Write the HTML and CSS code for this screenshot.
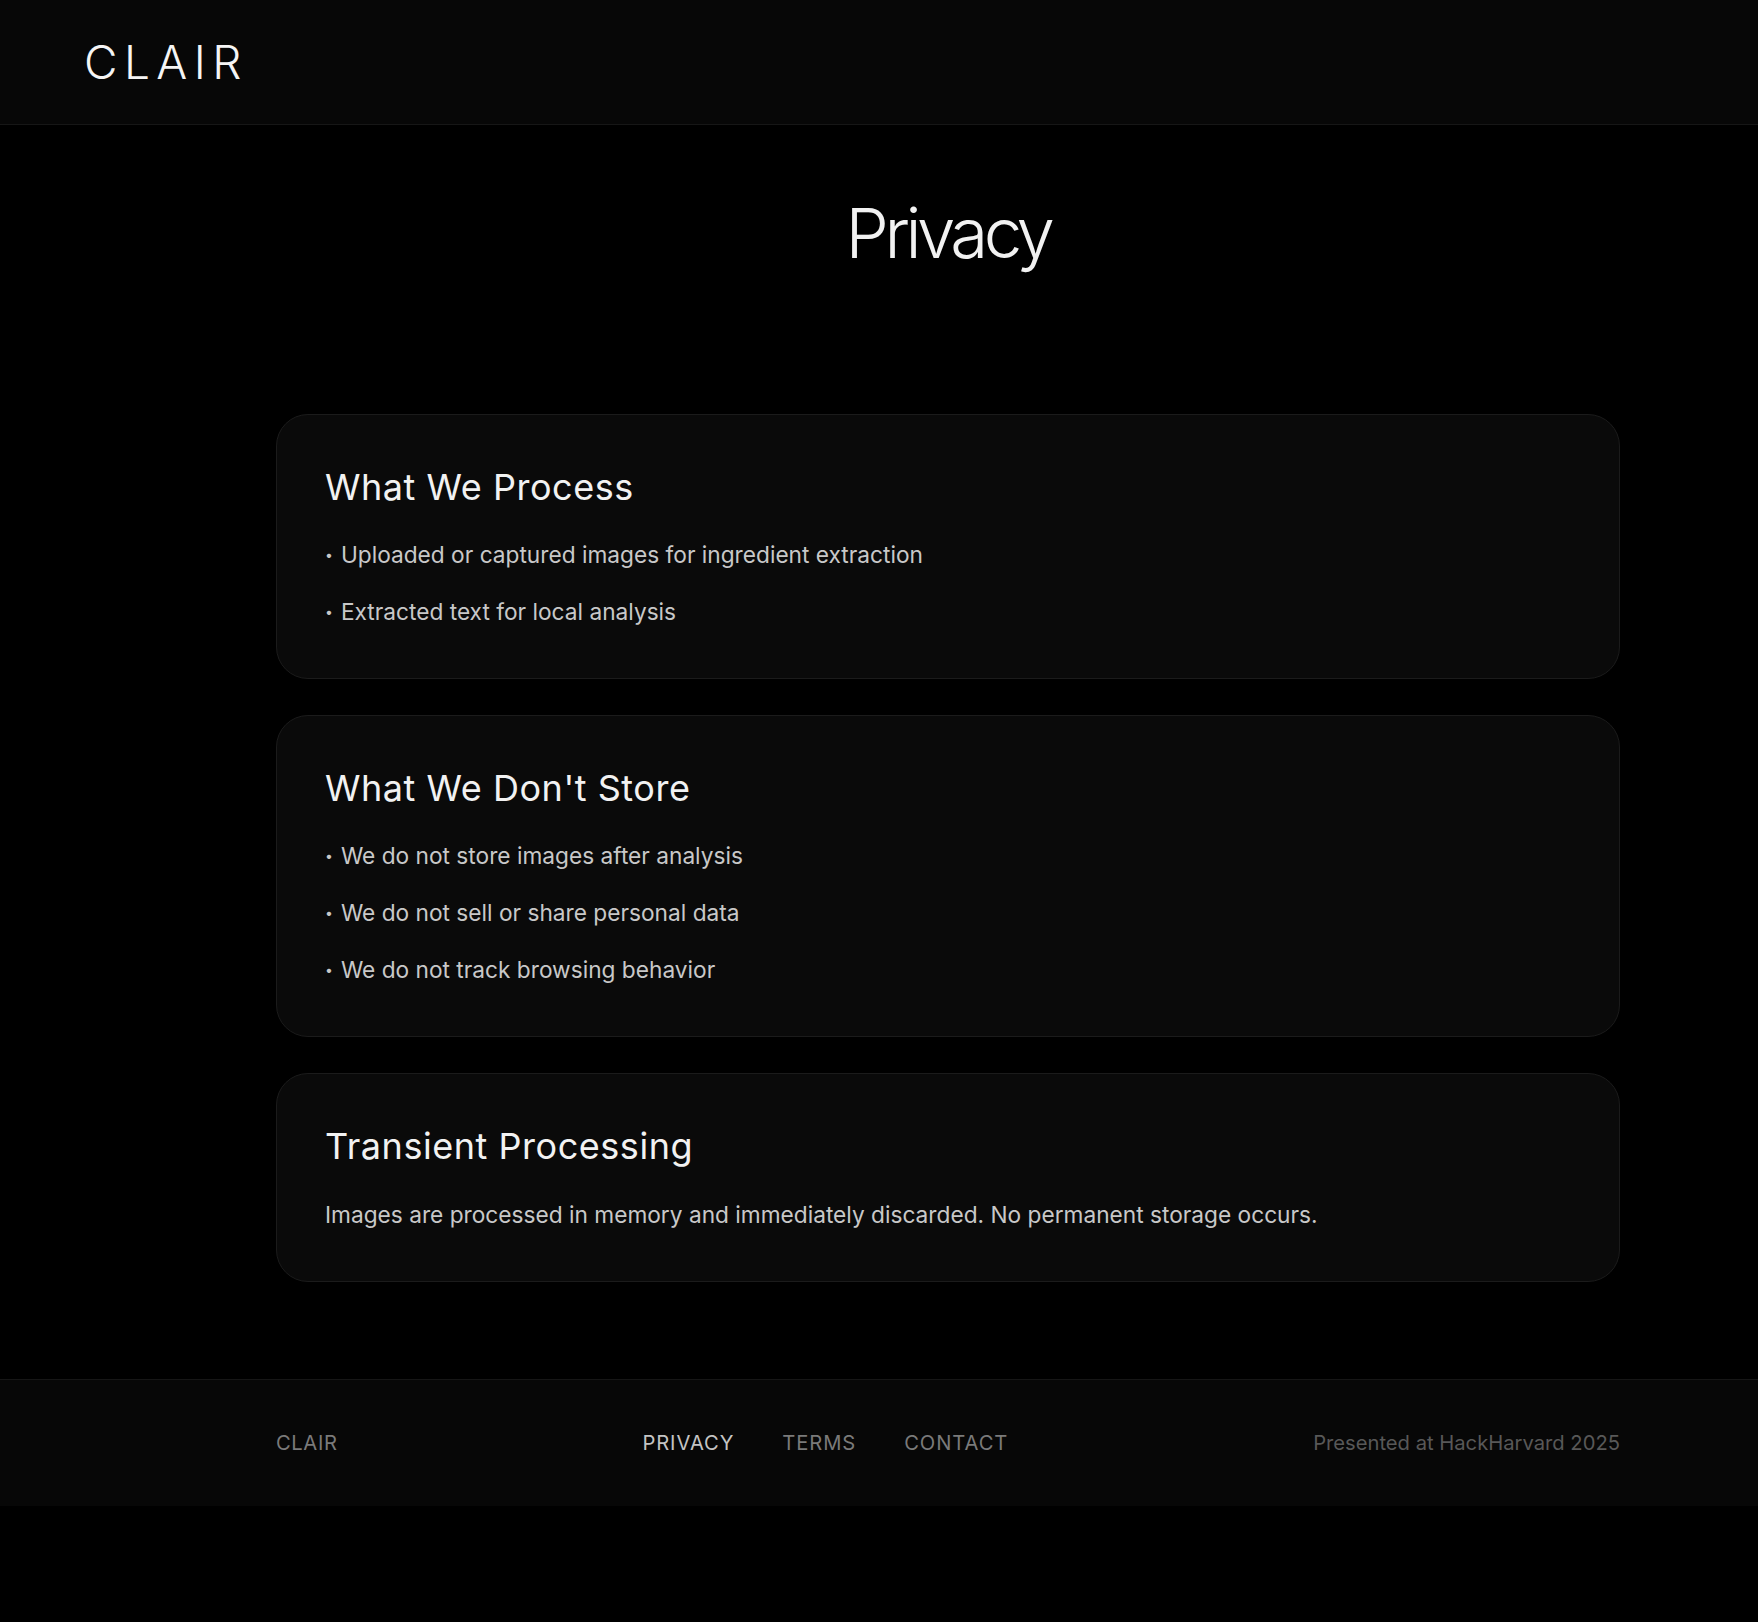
FILE: index.html
```html
<html>

<head>
    <meta http-equiv="Content-Type" content="text/html" charset="utf-8">
    <title>Privacy - CLAIR</title>
    <link rel="stylesheet" href="styles.css">
</head>

<body>
    <div id="header">
        <div class="logo">CLAIR</div>
    </div>

    <div id="main" class="container">
        <h1 class="page-title">Privacy</h1>

        <div class="cards">
            <div class="card">
                <h2>What We Process</h2>
                <ul>
                    <li>Uploaded or captured images for ingredient extraction</li>
                    <li>Extracted text for local analysis</li>
                </ul>
            </div>
            <div class="card">
                <h2>What We Don't Store</h2>
                <ul>
                    <li>We do not store images after analysis</li>
                    <li>We do not sell or share personal data</li>
                    <li>We do not track browsing behavior</li>
                </ul>
            </div>
            <div class="card">
                <h2>Transient Processing</h2>
                <p>Images are processed in memory and immediately discarded. No permanent storage occurs.</p>
            </div>
        </div>
    </div>

    <div id="footer">
        <div class="container footer-row">
            <div class="footer-brand">CLAIR</div>
            <div class="footer-nav">
                <a href="#" class="active">PRIVACY</a>
                <a href="#">TERMS</a>
                <a href="#">CONTACT</a>
            </div>
            <div class="footer-note">Presented at HackHarvard 2025</div>
        </div>
    </div>
</body>

</html>
```

FILE: styles.css
```css
body {
    margin: 0;
    background-color: #000;
    color: #f2f2f2;
    font-family: Inter, 'Noto Sans', sans-serif;
}

.container {
    width: 1344px;
    margin-left: 276px;
}

#header {
    height: 124px;
    display: flex;
    align-items: center;
    padding-left: 84px;
    background-color: #070707;
    border-bottom: 1px solid #161616;
}

.logo {
    font-size: 46px;
    font-weight: 300;
    letter-spacing: 0.14em;
    color: #f5f5f5;
}

#main {
    padding-top: 66px;
    padding-bottom: 97px;
}

.page-title {
    margin: 0 0 139px 0;
    text-align: center;
    font-size: 69px;
    font-weight: 300;
    letter-spacing: -0.065em;
    line-height: 84px;
}

.cards {
    display: flex;
    flex-direction: column;
    gap: 36px;
}

.card {
    background-color: #0a0a0a;
    border: 1px solid #1b1b1b;
    border-radius: 32px;
    padding: 51px 48px 49px 48px;
}

.card h2 {
    margin: 0 0 28px 0;
    font-size: 36px;
    font-weight: 400;
    line-height: 1.2;
    letter-spacing: 0.015em;
    color: #f2f2f2;
}

.card ul {
    list-style: none;
    margin: 0;
    padding: 0;
    display: flex;
    flex-direction: column;
    gap: 22px;
}

.card li,
.card p {
    margin: 0;
    font-size: 22.7px;
    line-height: 35px;
    color: #c8c8c8;
}

.card li::before {
    content: "\2022";
    font-size: 14px;
    margin-right: 8px;
    vertical-align: 3px;
}

#footer {
    background-color: #070707;
    border-top: 1px solid #161616;
    padding: 47px 0;
}

.footer-row {
    display: flex;
    justify-content: space-between;
    align-items: center;
    font-size: 20.2px;
    line-height: 32px;
}

.footer-brand {
    color: #7a7a7a;
    letter-spacing: 0.03em;
}

.footer-nav {
    display: flex;
    gap: 48px;
}

.footer-nav a {
    color: #7a7a7a;
    text-decoration: none;
    letter-spacing: 0.045em;
}

.footer-nav a.active {
    color: #c4c4c4;
}

.footer-note {
    color: #585858;
}
```
